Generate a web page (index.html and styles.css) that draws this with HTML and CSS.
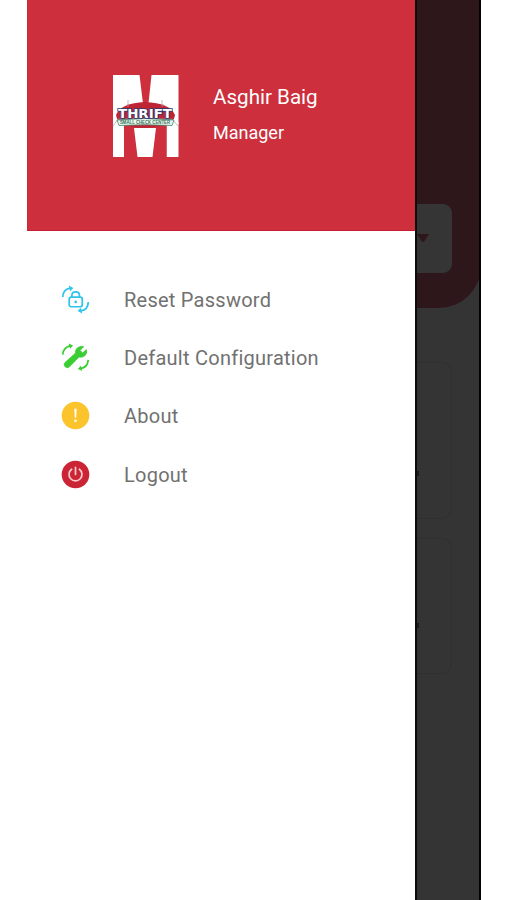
FILE: index.html
```html
<!DOCTYPE html>
<html lang="en">
<head>
    <meta charset="UTF-8">
    <title>Menu</title>
    <link rel="stylesheet" href="styles.css">
</head>
<body>
    <div class="screen">
        <div class="drawer">
            <div class="profile">
                <svg class="logo" viewBox="0 0 68 84">
                    <path fill="#fff" d="M1 1H27.500L31.500 34H36L39.500 1H66.500V50H1Z"/>
                    <path fill="#fff" d="M1 48H12V83H1ZM54.500 48H66.500V83H54.500ZM21 54H44.500L41 83H25Z"/>
                    <path fill="#cd2f3d" d="M12 83V50H21.500L25.500 83ZM54.500 83V50H44.500L40.500 83Z"/>
                    <path fill="#bd2535" d="M4 41Q9 29 33 28Q58 29 63 41Q62 53 33 54Q5 53 4 41Z"/>
                    <path fill="none" stroke="#a9a0ae" stroke-width="0.700" d="M16 26V33M50 26V33M1 52L6 45H60L66 52"/>
                    <path fill="#eef6ef" stroke="#43836a" stroke-width="0.800" d="M5 46Q33 43 62 46L60 51.500Q33 50 7 51.500Z"/>
                    <text class="logo-name" x="6" y="43.500" textLength="54" lengthAdjust="spacingAndGlyphs">THRIFT</text>
                    <text class="logo-tag" x="8" y="50.200" textLength="50" lengthAdjust="spacingAndGlyphs">SMALL CHECK CENTER</text>
                </svg>
                <div class="user">
                    <div class="user-name">Asghir Baig</div>
                    <div class="user-role">Manager</div>
                </div>
            </div>
            <div class="menu">
                <div class="menu-item">
                    <svg class="icon cyan" viewBox="0 0 30 30">
                        <path class="line" d="M1.800 12.500Q2 4 10 3.200M28.200 17.500Q28 26 20 26.800"/>
                        <path class="fill" d="M8 0.500L12.800 3L9.500 6.500ZM22 29.500L17.200 27L20.500 23.500Z"/>
                        <rect class="line" x="8.500" y="12.500" width="13.500" height="10" rx="2"/>
                        <path class="line" d="M11.300 12.500V10.500Q11.300 7 15.200 7Q19.100 7 19.100 10.500V12.500"/>
                        <circle class="fill" cx="15.200" cy="17.500" r="1.400"/>
                    </svg>
                    <span>Reset Password</span>
                </div>
                <div class="menu-item">
                    <svg class="icon green" viewBox="0 0 30 30">
                        <path class="line" d="M1.800 12Q2.500 4 10 3M28.200 17.500Q27.500 25.500 20 26.500"/>
                        <path class="fill" d="M8 0.500L12.500 2.500L9.500 6ZM22 29L17.500 27L20.500 23.500Z"/>
                        <path class="fill thick" d="M23.500 3.800L19.800 7.600L22.300 10.400L26.200 6.800Q27.500 10.800 24.500 13.300Q22 15.300 18.700 14.500L8.800 24.600Q6.500 26.500 4.300 24.500Q2.300 22.300 4.200 20.100L14.800 10.700Q14.300 7.500 16.800 5.200Q20 2.500 23.500 3.800Z"/>
                    </svg>
                    <span>Default Configuration</span>
                </div>
                <div class="menu-item">
                    <svg class="icon" viewBox="0 0 30 30">
                        <circle cx="15" cy="15" r="14.300" fill="#fcc42c"/>
                        <path fill="#fff" d="M13.800 8H16.200L15.700 17.200H14.300Z"/>
                        <circle cx="15" cy="20.500" r="1.300" fill="#fff"/>
                    </svg>
                    <span>About</span>
                </div>
                <div class="menu-item">
                    <svg class="icon" viewBox="0 0 30 30">
                        <circle cx="15" cy="15" r="14.300" fill="#cb2434"/>
                        <path class="power" d="M11 9.500A6.700 6.700 0 1 0 19 9.500M15 7.500V15"/>
                    </svg>
                    <span>Logout</span>
                </div>
            </div>
        </div>
        <!-- dimmed page behind the drawer -->
        <div class="behind">
            <div class="hero">
                <div class="picker">
                    <svg class="arrow" viewBox="0 0 12 9"><path fill="#2d171a" d="M0 0H12L7.500 7Q6 9 4.500 7Z"/></svg>
                </div>
            </div>
            <div class="card card-first"><i class="dot"></i></div>
            <div class="card card-second"><i class="dot"></i></div>
        </div>
    </div>
</body>
</html>
```

FILE: styles.css
```css
* {
    box-sizing: border-box;
}
body {
    margin: 0;
    background: #fff;
    font-family: Roboto, sans-serif;
    overflow: hidden;
}
.screen {
    display: flex;
    width: 453.5px;
    height: 900px;
    margin-left: 27px;
}
.drawer {
    width: 388px;
    background: #fff;
}
.profile {
    display: flex;
    height: 231px;
    padding: 74px 0 0 85px;
    background: #cd2f3d;
    border-bottom: 1px solid #c51f33;
    border-left: 1px solid #c92637;
}
.logo {
    width: 68px;
    height: 84px;
    margin-left: -1px;
}
.logo-name {
    font: bold 13px "DejaVu Sans", sans-serif;
    fill: #fff;
    stroke: #2b3b72;
    stroke-width: 1.6px;
    paint-order: stroke;
}
.logo-tag {
    font: bold 4.5px "Liberation Sans", sans-serif;
    fill: #31765a;
}
.user {
    padding: 10px 0 0 33px;
    color: #fff;
}
.user-name {
    font-size: 20.6px;
    line-height: 26px;
}
.user-role {
    margin-top: 12px;
    font-size: 18px;
    line-height: 22px;
}
.menu {
    padding: 40px 0 0 34px;
}
.menu-item {
    display: flex;
    align-items: center;
    gap: 34px;
    height: 58.2px;
    color: #717171;
    font-size: 20px;
    letter-spacing: 0.25px;
}
.icon {
    width: 29px;
    height: 29px;
    margin-top: -1px;
}
.cyan {
    color: #2fc4ea;
}
.green {
    color: #3ace34;
}
.line {
    fill: none;
    stroke: currentColor;
    stroke-width: 1.8;
}
.fill {
    fill: currentColor;
}
.thick {
    stroke: currentColor;
    stroke-width: 0.8;
}
.power {
    fill: none;
    stroke: #f8c8cc;
    stroke-width: 1.8;
    stroke-linecap: round;
}
.behind {
    width: 65.5px;
    background: #343434;
    border-left: 2px solid #0c0c0c;
    border-right: 2px solid #030303;
    overflow: hidden;
}
.hero {
    width: 64px;
    height: 308px;
    padding-top: 204px;
    background: #2d171a;
    border-bottom-right-radius: 42px;
}
.picker {
    width: 35px;
    height: 69px;
    padding-top: 30px;
    background: #343534;
    border-radius: 0 9px 9px 0;
}
.arrow {
    display: block;
    width: 12px;
    height: 9px;
}
.card {
    display: flex;
    align-items: center;
    width: 35px;
    border: 1px solid #303030;
    border-left: none;
    border-radius: 0 10px 10px 0;
}
.card-first {
    height: 157px;
    margin-top: 54px;
    padding-top: 66px;
}
.card-second {
    height: 136px;
    margin-top: 19px;
    padding-top: 38px;
}
.dot {
    width: 2px;
    height: 5px;
    background: #1c1c1c;
}
```
